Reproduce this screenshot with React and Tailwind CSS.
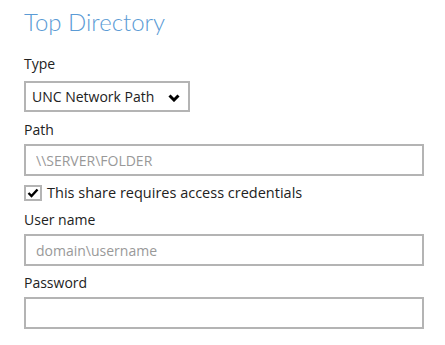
import React from 'react'

function Field({ label, placeholder, className = '' }) {
  return (
    <div className={className}>
      <div className="text-[14px] leading-[20px] text-[#222]">{label}</div>
      <input
        type="text"
        placeholder={placeholder}
        className="mt-[4px] block h-[32px] w-[400px] border-2 border-[#b4b4b4] bg-white px-[10px] text-[14px] text-[#333] outline-none placeholder:text-[#999]"
      />
    </div>
  )
}

export default function App() {
  return (
    <div
      className="h-[345px] w-[445px] bg-white px-[24px] pt-[6px]"
      style={{ fontFamily: '"Open Sans", "Noto Sans", sans-serif' }}
    >
      <h1
        className="text-[24px] leading-[32px] font-light text-[#5b9bd5]"
        style={{ fontFamily: 'Lato, "Open Sans", sans-serif' }}
      >
        Top Directory
      </h1>

      <div className="mt-[16px] text-[14px] leading-[20px] text-[#222]">Type</div>
      <div className="mt-[7px] flex h-[31px] w-[166px] items-center justify-between border-2 border-[#b4b4b4] pl-[6px] pr-[8px] text-[14px] text-[#222]">
        <span>UNC Network Path</span>
        <svg width="12" height="8" viewBox="0 0 12 8" className="mt-[2px]">
          <path d="M1.5 1.5 L6 6 L10.5 1.5" fill="none" stroke="#000" strokeWidth="3" strokeLinecap="butt" />
        </svg>
      </div>

      <Field label="Path" placeholder="\\SERVER\FOLDER" className="mt-[8px]" />

      <label className="mt-[8px] flex items-center gap-[5px] text-[14.5px] leading-[18px] text-[#222]">
        <span className="flex h-[16px] w-[18px] items-center justify-center border-2 border-[#b4b4b4] bg-white">
          <svg width="12" height="10" viewBox="0 0 12 10">
            <path d="M1.5 5 L4.5 8 L10.5 1.5" fill="none" stroke="#000" strokeWidth="2.4" />
          </svg>
        </span>
        This share requires access credentials
      </label>

      <Field label="User name" placeholder="domain\username" className="mt-[8px]" />
      <Field label="Password" placeholder="" className="mt-[7px]" />
    </div>
  )
}
